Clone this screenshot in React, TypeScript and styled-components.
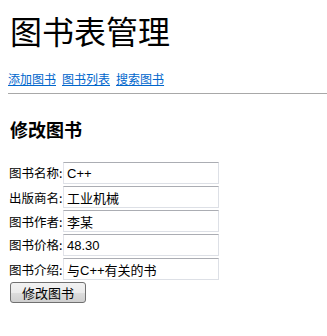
import styled, { createGlobalStyle } from "styled-components";

const GlobalStyle = createGlobalStyle`
  body {
    margin: 0;
    background: #ffffff;
    font-family: "Noto Sans CJK SC", "Liberation Sans", sans-serif;
  }
`;

const Page = styled.div`
  padding: 0 0 0 8px;
`;

const Title = styled.h1`
  margin: 0;
  padding: 11px 0 0 2px;
  font-size: 32px;
  line-height: 38px;
  font-weight: normal;
  color: #000;
`;

const Nav = styled.div`
  margin-top: 22px;
  font-size: 12px;
  line-height: 16px;
  display: flex;
  gap: 6px;
`;

const NavLink = styled.a`
  color: #0066cc;
  text-decoration: underline;
`;

const Rule = styled.hr`
  margin: 6px 0 0 0;
  border: 0;
  border-top: 1px solid #a8a8a8;
  height: 0;
`;

const Heading = styled.h3`
  margin: 0;
  padding: 23px 0 0 2px;
  font-size: 18px;
  line-height: 24px;
  font-weight: bold;
  color: #000;
`;

const Form = styled.form`
  margin-top: 21px;
  display: flex;
  flex-direction: column;
  gap: 2px;
`;

const Row = styled.div`
  display: flex;
  align-items: baseline;
`;

const Label = styled.span`
  width: 54px;
  padding-left: 1px;
  font-size: 12.5px;
  color: #000;
  white-space: nowrap;
`;

const Field = styled.input`
  box-sizing: border-box;
  width: 156px;
  height: 22px;
  margin: 0;
  padding: 0 3px;
  font-family: "Liberation Sans", "Noto Sans CJK SC", sans-serif;
  font-size: 13px;
  color: #000;
  background: #fff;
  border: 1px solid #dde0e6;
  border-top-color: #abadb3;
  border-left-color: #e2e3ea;
  outline: none;
`;

const Submit = styled.button`
  box-sizing: border-box;
  align-self: flex-start;
  margin: 0 0 0 2px;
  width: 76px;
  height: 21px;
  padding: 0;
  font-family: "Noto Sans CJK SC", sans-serif;
  font-size: 13px;
  line-height: 19px;
  color: #000;
  border: 1px solid #707070;
  border-radius: 3px;
  background: linear-gradient(#f2f2f2 0%, #ebebeb 50%, #dddddd 51%, #cfcfcf 100%);
`;

const fields = [
  { label: "图书名称:", value: "C++" },
  { label: "出版商名:", value: "工业机械" },
  { label: "图书作者:", value: "李某" },
  { label: "图书价格:", value: "48.30" },
  { label: "图书介绍:", value: "与C++有关的书" },
];

export default function App() {
  return (
    <>
      <GlobalStyle />
      <Page>
        <Title>图书表管理</Title>
        <Nav>
          <NavLink href="#">添加图书</NavLink>
          <NavLink href="#">图书列表</NavLink>
          <NavLink href="#">搜索图书</NavLink>
        </Nav>
        <Rule />
        <Heading>修改图书</Heading>
        <Form onSubmit={(e) => e.preventDefault()}>
          {fields.map((f) => (
            <Row key={f.label}>
              <Label>{f.label}</Label>
              <Field defaultValue={f.value} />
            </Row>
          ))}
          <Submit type="submit">修改图书</Submit>
        </Form>
      </Page>
    </>
  );
}
